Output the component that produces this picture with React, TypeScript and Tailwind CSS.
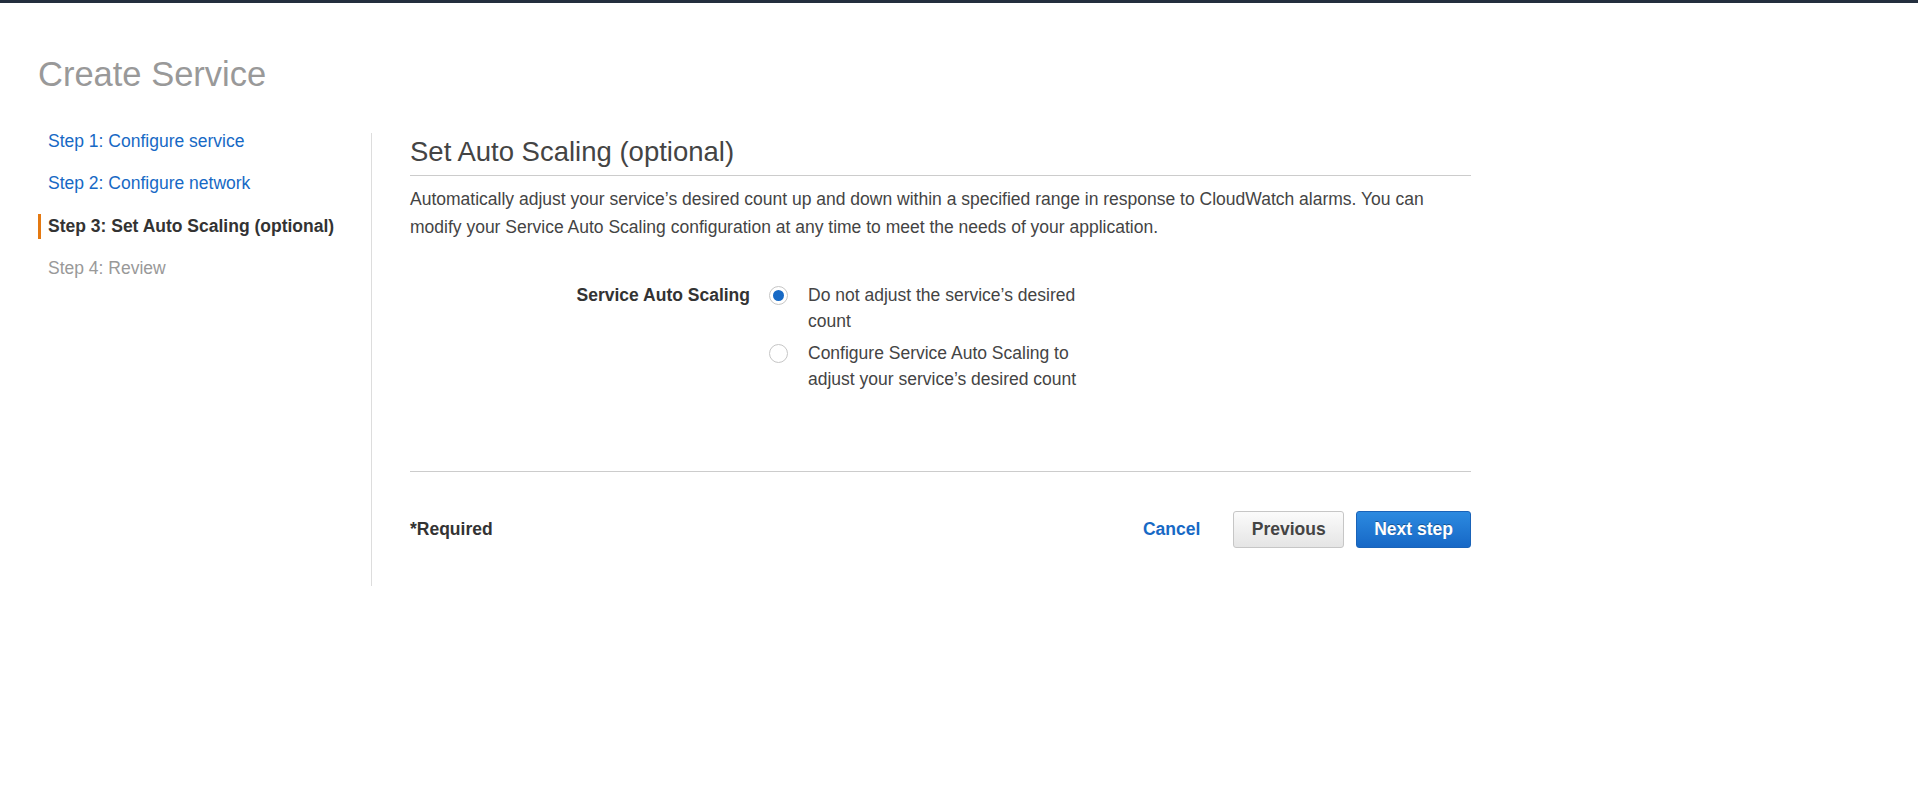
import React from "react";

const steps = [
  { label: "Step 1: Configure service", state: "link" },
  { label: "Step 2: Configure network", state: "link" },
  { label: "Step 3: Set Auto Scaling (optional)", state: "active" },
  { label: "Step 4: Review", state: "disabled" },
];

function Radio({ checked }: { checked: boolean }) {
  return (
    <div className="flex h-[26px] shrink-0 items-center">
      <div className="flex h-[19px] w-[19px] items-center justify-center rounded-full border border-[#c6c6c6] bg-white">
        {checked && <div className="h-[11px] w-[11px] rounded-full bg-[#1769c5]" />}
      </div>
    </div>
  );
}

export default function App() {
  return (
    <div className="min-h-[787px] bg-white font-['Liberation_Sans',Arial,sans-serif] text-[17.5px] text-[#444]">
      <div className="h-[3px] bg-[#232f3e]" />
      <div className="pl-[38px]">
        <h1 className="pt-[51px] text-[34.5px] leading-[40px] font-normal text-[#999]">Create Service</h1>
        <div className="mt-[26px] flex items-start">
          <nav className="w-[333px] shrink-0">
            {steps.map((s) => (
              <div key={s.label} className="flex h-[42.5px] items-center">
                {s.state === "active" ? (
                  <span className="border-l-[3px] border-[#e47911] pl-[7px] leading-[25px] font-bold text-[#333]">
                    {s.label}
                  </span>
                ) : (
                  <span
                    className={
                      s.state === "link"
                        ? "pl-[10px] leading-[25px] text-[#1769c5]"
                        : "pl-[10px] leading-[25px] text-[#999]"
                    }
                  >
                    {s.label}
                  </span>
                )}
              </div>
            ))}
          </nav>
          <main className="mt-[13px] w-[1100px] shrink-0 border-l border-[#ddd] pb-[38px] pl-[38px]">
            <h2 className="border-b border-[#ccc] pb-[4px] text-[27.5px] leading-[38px] font-normal text-[#444]">
              Set Auto Scaling (optional)
            </h2>
            <p className="mt-[9px] leading-[28px] text-[#444]">
              Automatically adjust your service’s desired count up and down within a specified range in response to
              CloudWatch alarms. You can modify your Service Auto Scaling configuration at any time to meet the needs of
              your application.
            </p>
            <div className="mt-[41px] flex items-start">
              <div className="w-[340px] shrink-0 text-right font-bold leading-[26px] text-[#333]">Service Auto Scaling</div>
              <div className="ml-[19px] flex flex-col gap-[6px]">
                <div className="flex items-start">
                  <Radio checked />
                  <div className="ml-[20px] w-[280px] leading-[26px] text-[#444]">Do not adjust the service’s desired count</div>
                </div>
                <div className="flex items-start">
                  <Radio checked={false} />
                  <div className="ml-[20px] w-[280px] leading-[26px] text-[#444]">
                    Configure Service Auto Scaling to adjust your service’s desired count
                  </div>
                </div>
              </div>
            </div>
            <div className="mt-[79px] h-px bg-[#ccc]" />
            <div className="mt-[39px] flex h-[37px] items-center justify-between">
              <div className="font-bold text-[#333]">*Required</div>
              <div className="flex items-center">
                <button className="mr-[33px] font-bold text-[#1769c5]">Cancel</button>
                <button className="mr-[12px] flex h-[37px] items-center rounded-[3px] border border-[#c6c6c6] bg-gradient-to-b from-[#fbfbfb] to-[#e5e5e5] px-[17.5px] font-bold text-[#444]">
                  Previous
                </button>
                <button className="flex h-[37px] items-center rounded-[3px] border border-[#1a63b8] bg-gradient-to-b from-[#2c8ae0] to-[#1768c6] px-[17px] font-bold text-white [text-shadow:0_-1px_0_rgba(0,0,0,0.35)]">
                  Next step
                </button>
              </div>
            </div>
          </main>
        </div>
      </div>
    </div>
  );
}
